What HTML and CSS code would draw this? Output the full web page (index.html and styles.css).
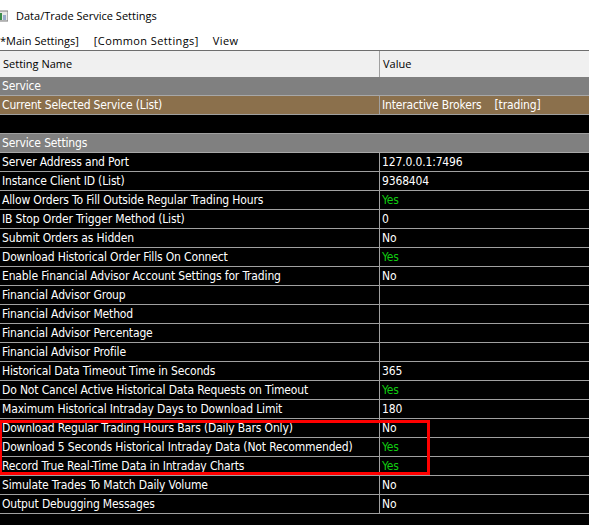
FILE: index.html
```html
<!DOCTYPE html>
<html>
<head>
<meta charset="utf-8">
<link rel="stylesheet" href="styles.css">
</head>
<body>
<div class="window">
  <div class="titlebar">
    <svg class="appicon" width="10" height="12" viewBox="0 0 10 12">
      <rect x="0" y="1" width="10" height="10" fill="#e8e8e8" stroke="#7a7a7a" stroke-width="1"/>
      <rect x="1" y="3" width="3" height="7" fill="#3c8c4a"/>
      <rect x="5" y="5" width="3" height="5" fill="#9ac"/>
    </svg>
    <span class="title">Data/Trade Service Settings</span>
  </div>
  <div class="menubar">
    <span class="menuitem first">*Main Settings]</span>
    <span class="menuitem">[Common Settings]</span>
    <span class="menuitem">View</span>
  </div>
  <div class="grid">
    <div class="row head"><div class="name">Setting Name</div><div class="val">Value</div></div>
    <div class="row section"><div class="full">Service</div></div>
    <div class="row selected"><div class="name">Current Selected Service (List)</div><div class="val">Interactive Brokers&nbsp;&nbsp;&nbsp;&nbsp;[trading]</div></div>
    <div class="row blank"></div>
    <div class="row section"><div class="full">Service Settings</div></div>
    <div class="row"><div class="name">Server Address and Port</div><div class="val">127.0.0.1:7496</div></div>
    <div class="row"><div class="name">Instance Client ID (List)</div><div class="val">9368404</div></div>
    <div class="row"><div class="name">Allow Orders To Fill Outside Regular Trading Hours</div><div class="val yes">Yes</div></div>
    <div class="row"><div class="name">IB Stop Order Trigger Method (List)</div><div class="val">0</div></div>
    <div class="row"><div class="name">Submit Orders as Hidden</div><div class="val">No</div></div>
    <div class="row"><div class="name">Download Historical Order Fills On Connect</div><div class="val yes">Yes</div></div>
    <div class="row"><div class="name">Enable Financial Advisor Account Settings for Trading</div><div class="val">No</div></div>
    <div class="row"><div class="name">Financial Advisor Group</div><div class="val"></div></div>
    <div class="row"><div class="name">Financial Advisor Method</div><div class="val"></div></div>
    <div class="row"><div class="name">Financial Advisor Percentage</div><div class="val"></div></div>
    <div class="row"><div class="name">Financial Advisor Profile</div><div class="val"></div></div>
    <div class="row"><div class="name">Historical Data Timeout Time in Seconds</div><div class="val">365</div></div>
    <div class="row"><div class="name">Do Not Cancel Active Historical Data Requests on Timeout</div><div class="val yes">Yes</div></div>
    <div class="row"><div class="name">Maximum Historical Intraday Days to Download Limit</div><div class="val">180</div></div>
    <div class="highlight">
      <div class="row"><div class="name">Download Regular Trading Hours Bars (Daily Bars Only)</div><div class="val">No</div></div>
      <div class="row"><div class="name">Download 5 Seconds Historical Intraday Data (Not Recommended)</div><div class="val yes">Yes</div></div>
      <div class="row"><div class="name">Record True Real-Time Data in Intraday Charts</div><div class="val yes">Yes</div></div>
      <div class="redbox"></div>
    </div>
    <div class="row"><div class="name">Simulate Trades To Match Daily Volume</div><div class="val">No</div></div>
    <div class="row"><div class="name">Output Debugging Messages</div><div class="val">No</div></div>
  </div>
</div>
</body>
</html>
```
FILE: styles.css
```css
html, body {
  margin: 0;
  padding: 0;
  background: #000;
}
.window {
  width: 589px;
  height: 525px;
  overflow: hidden;
  background: #000;
}
.titlebar {
  height: 30px;
  background: #fff;
  display: flex;
  align-items: center;
  font-family: "Open Sans", "Noto Sans", sans-serif;
  font-size: 11px;
  color: #000;
}
.appicon {
  margin-left: -2px;
  margin-top: 1px;
}
.title {
  margin-left: 8px;
}
.menubar {
  height: 20px;
  background: #fff;
  display: flex;
  align-items: center;
  font-family: "Open Sans", "Noto Sans", sans-serif;
  font-size: 11px;
  color: #000;
}
.menuitem {
  padding: 0 7px;
  letter-spacing: 0.4px;
}
.menuitem.first {
  padding-left: 0;
  padding-right: 8px;
  letter-spacing: 0;
}
.grid {
  font-family: "DejaVu Sans Condensed", "DejaVu Sans", sans-serif;
  font-size: 12px;
  letter-spacing: -0.15px;
  color: #fff;
  background: #000;
}
.row {
  display: flex;
  height: 18px;
  border-bottom: 1px solid #a0a0a0;
  line-height: 19px;
}
.name {
  width: 379px;
  padding-left: 2px;
  box-sizing: border-box;
  white-space: nowrap;
  overflow: hidden;
}
.val {
  flex: 1;
  border-left: 1px solid #a0a0a0;
  padding-left: 2px;
  white-space: nowrap;
}
.val.yes {
  color: #10cc10;
}
.row.head {
  height: 26px;
  line-height: 26px;
  background: #f0f0f0;
  color: #000;
  border-top: 1px solid #6e6e6e;
  border-bottom: none;
  font-family: "Open Sans", "Noto Sans", sans-serif;
  font-size: 11px;
  letter-spacing: 0;
}
.row.head .name {
  padding-left: 3px;
}
.row.head .val {
  border-left: 1px solid #a0a0a0;
  padding-left: 3px;
}
.row.section {
  background: #808080;
  border-bottom-color: #a8a8a8;
}
.full {
  padding-left: 2px;
}
.row.selected {
  background: #8b704c;
}
.row.blank {
  background: #000;
}
.highlight {
  position: relative;
}
.redbox {
  position: absolute;
  left: -1px;
  top: 1px;
  width: 425px;
  height: 49px;
  border: 3px solid #ff0000;
  pointer-events: none;
}
```
